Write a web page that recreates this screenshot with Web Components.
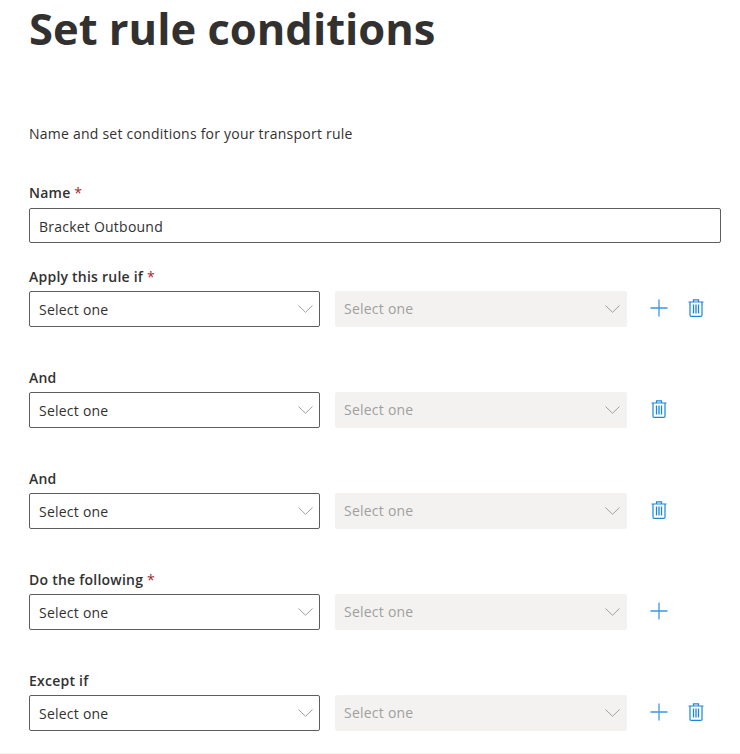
<!DOCTYPE html>
<html lang="en">
<head>
<meta charset="utf-8">
<title>Set rule conditions</title>
<style>
  html, body { margin: 0; background: #fff; }
  body { font-family: "Open Sans", "Noto Sans", sans-serif; color: #323130; height: 754px; overflow: hidden; letter-spacing: .23px; }
</style>
</head>
<body>
<rule-page>
  <field-row label="Apply this rule if" required add remove></field-row>
  <field-row label="And" remove></field-row>
  <field-row label="And" remove></field-row>
  <field-row label="Do the following" required add></field-row>
  <field-row label="Except if" add remove></field-row>
</rule-page>
<script>
const PLUS = `<svg width="20" height="20" viewBox="0 0 20 20"><path d="M0.5 10H19.5M10 0.5V19.5" stroke="#3b96de" stroke-width="1.4" fill="none"/></svg>`;
const TRASH = `<svg width="16" height="18" viewBox="0 0 16 18" fill="none" stroke="#1a86d9" stroke-width="1.2"><path d="M0.5 3H15.5M5.5 3V0.8H10.5V3M2 3V16.2Q2 17.4 3.2 17.4H12.8Q14 17.4 14 16.2V3"/><path d="M5.5 5.5V14.5M8 5.5V14.5M10.5 5.5V14.5" stroke-width="1.3"/></svg>`;

class SelectBox extends HTMLElement {
  connectedCallback() {
    const disabled = this.hasAttribute('disabled');
    this.attachShadow({ mode: 'open' });
    this.shadowRoot.innerHTML = `
      <style>
        :host { display: block; width: ${disabled ? 292 : 291}px; }
        .box {
          box-sizing: border-box;
          height: 36px;
          display: flex;
          align-items: center;
          justify-content: space-between;
          padding: 0 6px 0 ${disabled ? 8 : 9}px;
          border: 1px solid ${disabled ? '#f3f2f1' : '#605e5c'};
          border-radius: 2px;
          background: ${disabled ? '#f3f2f1' : '#fff'};
          color: ${disabled ? '#a19f9d' : '#323130'};
          font-size: 14px;
        }
        span { position: relative; top: ${disabled ? -1 : 0}px; }
        svg { display: block; }
      </style>
      <div class="box">
        <span>Select one</span>
        <svg width="15" height="8" viewBox="0 0 15 8"><path d="M0.5 0.5L7.5 7.3L14.5 0.5" stroke="#a19f9d" stroke-width="1" fill="none"/></svg>
      </div>`;
  }
}
customElements.define('select-box', SelectBox);

class FieldRow extends HTMLElement {
  connectedCallback() {
    const label = this.getAttribute('label');
    const star = this.hasAttribute('required') ? ' <b>*</b>' : '';
    const add = this.hasAttribute('add');
    const remove = this.hasAttribute('remove');
    this.attachShadow({ mode: 'open' });
    this.shadowRoot.innerHTML = `
      <style>
        :host { display: block; height: 101px; }
        label { display: block; height: 25px; line-height: 22px; font-size: 14px; font-weight: 600; }
        b { color: #a4262c; font-weight: 500; }
        .line { display: flex; align-items: center; gap: 15px; }
        .icons { display: flex; align-items: center; gap: 19px; margin-left: 8px; height: 36px; position: relative; top: -1px; }
        .icons div { width: 18px; display: flex; justify-content: center; }
      </style>
      <label>${label}${star}</label>
      <div class="line">
        <select-box></select-box>
        <select-box disabled></select-box>
        <div class="icons">
          ${add ? `<div>${PLUS}</div>` : ''}
          ${remove ? `<div>${TRASH}</div>` : ''}
        </div>
      </div>`;
  }
}
customElements.define('field-row', FieldRow);

class RulePage extends HTMLElement {
  connectedCallback() {
    this.attachShadow({ mode: 'open' });
    this.shadowRoot.innerHTML = `
      <style>
        :host { display: block; box-sizing: border-box; height: 754px; padding: 0 19px 0 29px; border-bottom: 1px solid #f3f2f1; }
        h1 { margin: 0; height: 124px; padding-top: 1px; box-sizing: border-box; font-size: 43.5px; line-height: 56px; font-weight: 700; letter-spacing: 0; }
        p { margin: 0; height: 57px; line-height: 20px; font-size: 14px; }
        .name { display: block; height: 27px; line-height: 24px; font-size: 14px; font-weight: 600; }
        b { color: #a4262c; font-weight: 500; }
        .input {
          box-sizing: border-box; height: 35px; width: 692px;
          display: flex; align-items: center; padding: 2px 0 0 9px;
          border: 1px solid #605e5c; border-radius: 2px; font-size: 14px;
        }
        .rows { margin-top: 23px; }
      </style>
      <h1>Set rule conditions</h1>
      <p>Name and set conditions for your transport rule</p>
      <label class="name">Name <b>*</b></label>
      <div class="input">Bracket Outbound</div>
      <div class="rows"><slot></slot></div>`;
  }
}
customElements.define('rule-page', RulePage);
</script>
</body>
</html>
